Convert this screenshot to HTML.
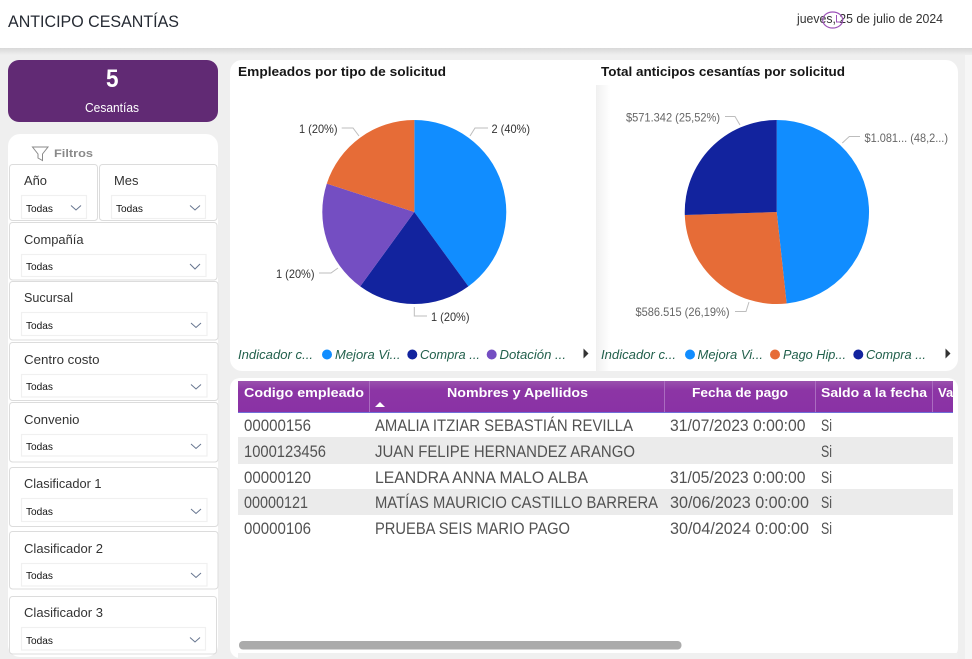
<!DOCTYPE html>
<html lang="es"><head><meta charset="utf-8"><title>Anticipo Cesantías</title>
<style>
html,body{margin:0;padding:0;width:972px;height:659px;overflow:hidden;background:#efefef}
svg{display:block}
text{font-family:"Liberation Sans",sans-serif;white-space:pre}
.lb{font-size:13px;fill:#333}
.td{font-size:10.5px;fill:#111}
.dd{fill:#fff;stroke:#f0f0f0;stroke-width:1.2}
.box{fill:#fff;stroke:#dcdcdc;stroke-width:1}
.ch{fill:none;stroke:#66758f;stroke-width:1}
.tt{font-size:13px;font-weight:700;fill:#161616}
.d1{font-size:12px;fill:#333}
.d2{font-size:12px;fill:#666}
.ld{fill:none;stroke:#bdbdbd;stroke-width:1}
.lg{font-size:12.5px;font-style:italic;fill:#22604c}
.h{font-size:13px;font-weight:700;fill:#fff}
.c{font-size:16.5px;fill:#525252}
.dv{stroke:#ab6cc0;stroke-width:1}
</style></head><body>
<svg width="972" height="659" viewBox="0 0 972 659" xmlns="http://www.w3.org/2000/svg">
<defs>
<linearGradient id="sh" x1="0" y1="0" x2="0" y2="1"><stop offset="0" stop-color="#d8d8d8"/><stop offset="1" stop-color="#efefef"/></linearGradient>
<linearGradient id="sd" x1="0" y1="0" x2="1" y2="0"><stop offset="0" stop-color="#f0f0f0"/><stop offset="1" stop-color="#ffffff"/></linearGradient>
<linearGradient id="hd" x1="0" y1="0" x2="0" y2="1"><stop offset="0" stop-color="#9a52ad"/><stop offset=".3" stop-color="#8c35a5"/><stop offset="1" stop-color="#8a32a5"/></linearGradient>
<clipPath id="tc"><rect x="238" y="381" width="715" height="31"/></clipPath>
</defs>
<rect width="972" height="659" fill="#efefef"/>
<rect x="965" y="55" width="7" height="604" fill="#f6f6f6"/>
<rect y="48" width="972" height="7" fill="url(#sh)"/>
<rect width="972" height="48" fill="#fff"/>
<text x="8" y="27" font-size="17" fill="#252a33" textLength="171" lengthAdjust="spacingAndGlyphs">ANTICIPO CESANTÍAS</text>
<text x="797" y="23" font-size="12.5" fill="#333" textLength="146" lengthAdjust="spacingAndGlyphs">jueves, 25 de julio de 2024</text>
<ellipse cx="832.7" cy="20" rx="10" ry="8" fill="none" stroke="#9c52b8" stroke-width="1.2"/>
<path d="M836.5 15V22H841" fill="none" stroke="#9c52b8" stroke-width="1"/>

<rect x="8" y="60" width="210" height="62" rx="11" fill="#612a74"/>
<text x="106" y="87" font-size="25" font-weight="700" fill="#fff" textLength="12.500" lengthAdjust="spacingAndGlyphs">5</text>
<text x="85" y="112" font-size="13" fill="#fff" textLength="54" lengthAdjust="spacingAndGlyphs">Cesantías</text>

<rect x="8" y="134" width="210" height="523" rx="12" fill="#fff"/>
<path d="M32.5 147H48L42.5 154V160.5L38 158V154Z" fill="none" stroke="#8a8a8a" stroke-width="1"/>
<text x="54" y="157" font-size="11" font-weight="700" fill="#8a8a8a" textLength="39" lengthAdjust="spacingAndGlyphs">Filtros</text>

<rect class="box" x="9.5" y="164.5" width="88" height="56" rx="3"/>
<rect class="box" x="99.5" y="164.5" width="117.500" height="56" rx="3"/>
<rect class="box" x="9.500" y="222.500" width="207.500" height="57.500" rx="3"/>
<rect class="box" x="9.500" y="281.500" width="208.500" height="58.500" rx="3"/>
<rect class="box" x="9.500" y="342.500" width="208.500" height="58" rx="3"/>
<rect class="box" x="9.500" y="402.500" width="208.500" height="59.500" rx="3"/>
<rect class="box" x="9.500" y="467.500" width="208.500" height="59" rx="3"/>
<rect class="box" x="9.500" y="531.500" width="208.500" height="57.500" rx="3"/>
<rect class="box" x="9.500" y="596.500" width="207" height="57.500" rx="3"/>

<text class="lb" x="24" y="185" textLength="23" lengthAdjust="spacingAndGlyphs">Año</text>
<text class="lb" x="114" y="185" textLength="24.500" lengthAdjust="spacingAndGlyphs">Mes</text>
<text class="lb" x="24" y="244" textLength="59.500" lengthAdjust="spacingAndGlyphs">Compañía</text>
<text class="lb" x="24" y="302" textLength="49" lengthAdjust="spacingAndGlyphs">Sucursal</text>
<text class="lb" x="24" y="364" textLength="75.500" lengthAdjust="spacingAndGlyphs">Centro costo</text>
<text class="lb" x="24" y="424" textLength="55.500" lengthAdjust="spacingAndGlyphs">Convenio</text>
<text class="lb" x="24" y="488" textLength="77.500" lengthAdjust="spacingAndGlyphs">Clasificador 1</text>
<text class="lb" x="24" y="553" textLength="79" lengthAdjust="spacingAndGlyphs">Clasificador 2</text>
<text class="lb" x="24" y="617" textLength="79" lengthAdjust="spacingAndGlyphs">Clasificador 3</text>

<rect class="dd" x="21.500" y="195.500" width="65" height="23"/>
<rect class="dd" x="111.500" y="195.500" width="94" height="23"/>
<rect class="dd" x="21.500" y="254.500" width="184.500" height="22"/>
<rect class="dd" x="21.500" y="312.500" width="185.500" height="23"/>
<rect class="dd" x="21.500" y="374.500" width="185.500" height="22.500"/>
<rect class="dd" x="21.500" y="434.500" width="185.500" height="21.500"/>
<rect class="dd" x="21.500" y="498.500" width="185.500" height="23"/>
<rect class="dd" x="21.500" y="563.500" width="185.500" height="22.500"/>
<rect class="dd" x="21.500" y="627.500" width="184" height="22.500"/>

<text class="td" x="26" y="212" textLength="27" lengthAdjust="spacingAndGlyphs">Todas</text>
<text class="td" x="116" y="212" textLength="27" lengthAdjust="spacingAndGlyphs">Todas</text>
<text class="td" x="26" y="270" textLength="27" lengthAdjust="spacingAndGlyphs">Todas</text>
<text class="td" x="26" y="329" textLength="27" lengthAdjust="spacingAndGlyphs">Todas</text>
<text class="td" x="26" y="390" textLength="27" lengthAdjust="spacingAndGlyphs">Todas</text>
<text class="td" x="26" y="450" textLength="27" lengthAdjust="spacingAndGlyphs">Todas</text>
<text class="td" x="26" y="515" textLength="27" lengthAdjust="spacingAndGlyphs">Todas</text>
<text class="td" x="26" y="579" textLength="27" lengthAdjust="spacingAndGlyphs">Todas</text>
<text class="td" x="26" y="644" textLength="27" lengthAdjust="spacingAndGlyphs">Todas</text>

<path class="ch" d="M71 205.500L76 210L81 205.500"/>
<path class="ch" d="M190 205.500L195 210L200 205.500"/>
<path class="ch" d="M190 264L195 269L200 264"/>
<path class="ch" d="M191 323L196 327.500L201 323"/>
<path class="ch" d="M191 384.500L196 389L201 384.500"/>
<path class="ch" d="M191 444L196 448.500L201 444"/>
<path class="ch" d="M191 509L196 513.500L201 509"/>
<path class="ch" d="M191 573L196 577.500L201 573"/>
<path class="ch" d="M190 637.500L195 642L200 637.500"/>

<rect x="230" y="60" width="728" height="311" rx="12" fill="#fff"/>
<rect x="596" y="85" width="14" height="286" fill="url(#sd)"/>

<text class="tt" x="238" y="76" textLength="208" lengthAdjust="spacingAndGlyphs">Empleados por tipo de solicitud</text>
<text class="tt" x="601" y="76" textLength="244" lengthAdjust="spacingAndGlyphs">Total anticipos cesantías por solicitud</text>

<path d="M414.300 212V120A92 92 0 0 1 468.400 286.400Z" fill="#118dff"/>
<path d="M414.300 212L468.400 286.400A92 92 0 0 1 360.200 286.400Z" fill="#12239e"/>
<path d="M414.300 212L360.200 286.400A92 92 0 0 1 326.800 183.600Z" fill="#744ec2"/>
<path d="M414.300 212L326.800 183.600A92 92 0 0 1 414.300 120Z" fill="#e66c37"/>
<path class="ld" d="M470 136L475 128H488"/>
<path class="ld" d="M341.700 128H353L359 136"/>
<path class="ld" d="M319 273H331L338 268"/>
<path class="ld" d="M414.300 307V316H427"/>
<text class="d1" x="491.500" y="133" textLength="38.500" lengthAdjust="spacingAndGlyphs">2 (40%)</text>
<text class="d1" x="299" y="133" textLength="38.500" lengthAdjust="spacingAndGlyphs">1 (20%)</text>
<text class="d1" x="276" y="278" textLength="38.500" lengthAdjust="spacingAndGlyphs">1 (20%)</text>
<text class="d1" x="431" y="321" textLength="38.500" lengthAdjust="spacingAndGlyphs">1 (20%)</text>

<path d="M776.700 212V120A92 92 0 0 1 786.600 303.500Z" fill="#118dff"/>
<path d="M776.700 212L786.600 303.500A92 92 0 0 1 684.800 215Z" fill="#e66c37"/>
<path d="M776.700 212L684.800 215A92 92 0 0 1 776.700 120Z" fill="#12239e"/>
<path class="ld" d="M725 116.500H735L740 125"/>
<path class="ld" d="M842.300 143L849.300 136.500H860"/>
<path class="ld" d="M735 311.500H746L749 302"/>
<text class="d2" x="626" y="121.500" textLength="94" lengthAdjust="spacingAndGlyphs">$571.342 (25,52%)</text>
<text class="d2" x="864.500" y="142" textLength="83.500" lengthAdjust="spacingAndGlyphs">$1.081... (48,2...)</text>
<text class="d2" x="635.500" y="316" textLength="94" lengthAdjust="spacingAndGlyphs">$586.515 (26,19%)</text>

<text class="lg" x="238" y="359" textLength="75" lengthAdjust="spacingAndGlyphs">Indicador c...</text>
<circle cx="327" cy="354.500" r="5" fill="#118dff"/>
<text class="lg" x="335" y="359" textLength="65.500" lengthAdjust="spacingAndGlyphs">Mejora Vi...</text>
<circle cx="412.300" cy="354.500" r="5" fill="#12239e"/>
<text class="lg" x="420" y="359" textLength="60" lengthAdjust="spacingAndGlyphs">Compra ...</text>
<circle cx="491.700" cy="354.500" r="5" fill="#744ec2"/>
<text class="lg" x="499.500" y="359" textLength="66.500" lengthAdjust="spacingAndGlyphs">Dotación ...</text>
<path d="M583.500 348.500L588.500 353.500L583.500 358.500Z" fill="#333"/>

<text class="lg" x="601" y="359" textLength="75" lengthAdjust="spacingAndGlyphs">Indicador c...</text>
<circle cx="690" cy="354.500" r="5" fill="#118dff"/>
<text class="lg" x="697.500" y="359" textLength="65.500" lengthAdjust="spacingAndGlyphs">Mejora Vi...</text>
<circle cx="775" cy="354.500" r="5" fill="#e66c37"/>
<text class="lg" x="783" y="359" textLength="63" lengthAdjust="spacingAndGlyphs">Pago Hip...</text>
<circle cx="858.300" cy="354.500" r="5" fill="#12239e"/>
<text class="lg" x="866" y="359" textLength="60" lengthAdjust="spacingAndGlyphs">Compra ...</text>
<path d="M945.500 348.500L950.500 353.500L945.500 358.500Z" fill="#333"/>

<rect x="230" y="378" width="728" height="280" rx="10" fill="#fff"/>
<rect x="238" y="653" width="720" height="6" fill="#f0f0f0"/>
<rect x="238" y="381" width="715" height="31" fill="url(#hd)"/>
<rect x="238" y="412" width="715" height="1" fill="#6f6fd8"/>
<rect x="238" y="437" width="715" height="27" fill="#ebebeb"/>
<rect x="238" y="489" width="715" height="26" fill="#ebebeb"/>
<path class="dv" d="M369.500 381V412M664.500 381V412M815.500 381V412M932.500 381V412"/>
<g clip-path="url(#tc)">
<text class="h" x="244" y="397" textLength="120" lengthAdjust="spacingAndGlyphs">Codigo empleado</text>
<text class="h" x="447" y="397" textLength="141" lengthAdjust="spacingAndGlyphs">Nombres y Apellidos</text>
<text class="h" x="692" y="397" textLength="96" lengthAdjust="spacingAndGlyphs">Fecha de pago</text>
<text class="h" x="821" y="397" textLength="106" lengthAdjust="spacingAndGlyphs">Saldo a la fecha</text>
<text class="h" x="938" y="397">Valor</text>
</g>
<path d="M375 407L380 402L385 407Z" fill="#fff"/>

<text class="c" x="244" y="431" textLength="67" lengthAdjust="spacingAndGlyphs">00000156</text>
<text class="c" x="244" y="457" textLength="82" lengthAdjust="spacingAndGlyphs">1000123456</text>
<text class="c" x="244" y="483" textLength="67" lengthAdjust="spacingAndGlyphs">00000120</text>
<text class="c" x="244" y="508" textLength="64" lengthAdjust="spacingAndGlyphs">00000121</text>
<text class="c" x="244" y="534" textLength="67" lengthAdjust="spacingAndGlyphs">00000106</text>

<text class="c" x="375" y="431" textLength="258" lengthAdjust="spacingAndGlyphs">AMALIA ITZIAR SEBASTIÁN REVILLA</text>
<text class="c" x="375" y="457" textLength="260" lengthAdjust="spacingAndGlyphs">JUAN FELIPE HERNANDEZ ARANGO</text>
<text class="c" x="375" y="483" textLength="213" lengthAdjust="spacingAndGlyphs">LEANDRA ANNA MALO ALBA</text>
<text class="c" x="375" y="508" textLength="283" lengthAdjust="spacingAndGlyphs">MATÍAS MAURICIO CASTILLO BARRERA</text>
<text class="c" x="375" y="534" textLength="195" lengthAdjust="spacingAndGlyphs">PRUEBA SEIS MARIO PAGO</text>

<text class="c" x="670" y="431" textLength="135.500" lengthAdjust="spacingAndGlyphs">31/07/2023 0:00:00</text>
<text class="c" x="670" y="483" textLength="135.500" lengthAdjust="spacingAndGlyphs">31/05/2023 0:00:00</text>
<text class="c" x="670" y="508" textLength="139" lengthAdjust="spacingAndGlyphs">30/06/2023 0:00:00</text>
<text class="c" x="670" y="534" textLength="139" lengthAdjust="spacingAndGlyphs">30/04/2024 0:00:00</text>

<text class="c" x="821" y="431" textLength="11" lengthAdjust="spacingAndGlyphs">Si</text>
<text class="c" x="821" y="457" textLength="11" lengthAdjust="spacingAndGlyphs">Si</text>
<text class="c" x="821" y="483" textLength="11" lengthAdjust="spacingAndGlyphs">Si</text>
<text class="c" x="821" y="508" textLength="11" lengthAdjust="spacingAndGlyphs">Si</text>
<text class="c" x="821" y="534" textLength="11" lengthAdjust="spacingAndGlyphs">Si</text>

<rect x="239" y="641" width="442.500" height="8.500" rx="4" fill="#ababab"/>
</svg>
</body></html>
